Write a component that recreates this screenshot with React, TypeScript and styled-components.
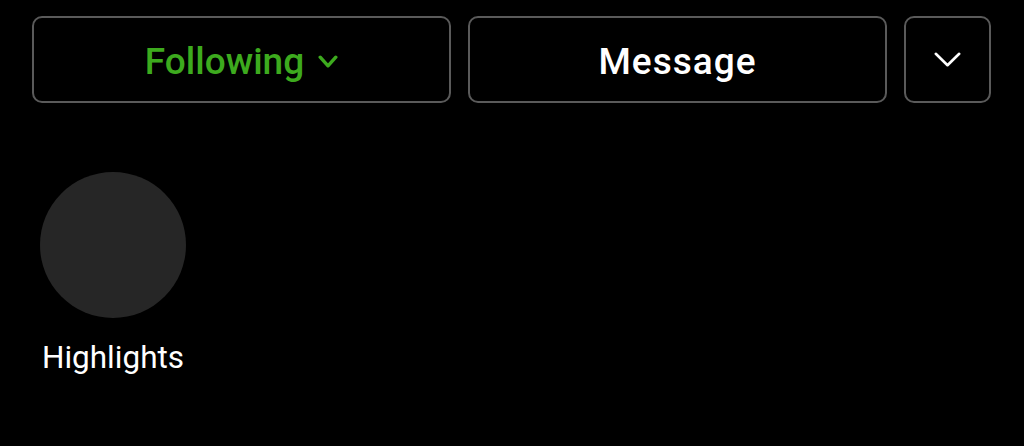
import React from "react";
import styled, { createGlobalStyle } from "styled-components";

const Global = createGlobalStyle`
  html, body { margin: 0; padding: 0; background: #000; }
  body { font-family: Roboto, "Noto Sans", Arial, sans-serif; }
`;

const Page = styled.div`
  width: 1024px;
  height: 446px;
  background: #000;
  box-sizing: border-box;
  padding: 16px 33px 0 32px;
  display: flex;
  flex-direction: column;
`;

const ButtonRow = styled.div`
  display: flex;
  gap: 17px;
`;

const Button = styled.button<{ $square?: boolean; $color?: string; $spacing?: number }>`
  box-sizing: border-box;
  height: 87px;
  ${(p) => (p.$square ? "width: 87px; flex: none;" : "flex: 1;")}
  border: 2px solid #5a5a5a;
  border-radius: 10px;
  background: #000;
  color: ${(p) => p.$color || "#fff"};
  font-family: Roboto, Arial, sans-serif;
  font-weight: 500;
  font-size: 37px;
  letter-spacing: ${(p) => p.$spacing ?? 0}px;
  display: flex;
  align-items: center;
  justify-content: center;
  gap: 14px;
  padding: ${(p) => (p.$square ? "0" : "4px 0 0")};
`;

const Highlights = styled.div`
  margin-top: 69px;
  margin-left: 8px;
  width: 146px;
  display: flex;
  flex-direction: column;
  align-items: center;
`;

const Circle = styled.div`
  width: 146px;
  height: 146px;
  border-radius: 50%;
  background: #262626;
`;

const Label = styled.div`
  margin-top: 21px;
  color: #fff;
  font-family: Roboto, Arial, sans-serif;
  font-size: 31.5px;
  line-height: 37px;
  white-space: nowrap;
`;

const Chevron = ({ w, h, sw, color }: { w: number; h: number; sw: number; color: string }) => (
  <svg width={w} height={h} viewBox={`0 0 ${w} ${h}`} fill="none">
    <polyline
      points={`${sw / 2 + 0.5},${sw / 2 + 0.5} ${w / 2},${h - sw / 2 - 0.5} ${w - sw / 2 - 0.5},${sw / 2 + 0.5}`}
      stroke={color}
      strokeWidth={sw}
      strokeLinecap="round"
      strokeLinejoin="round"
    />
  </svg>
);

export default function App() {
  return (
    <>
      <Global />
      <Page>
        <ButtonRow>
          <Button $color="#3daa1e">
            Following
            <Chevron w={20} h={13} sw={3.4} color="#3daa1e" />
          </Button>
          <Button $spacing={1}>Message</Button>
          <Button $square>
            <Chevron w={27} h={15} sw={2.6} color="#fff" />
          </Button>
        </ButtonRow>
        <Highlights>
          <Circle />
          <Label>Highlights</Label>
        </Highlights>
      </Page>
    </>
  );
}
